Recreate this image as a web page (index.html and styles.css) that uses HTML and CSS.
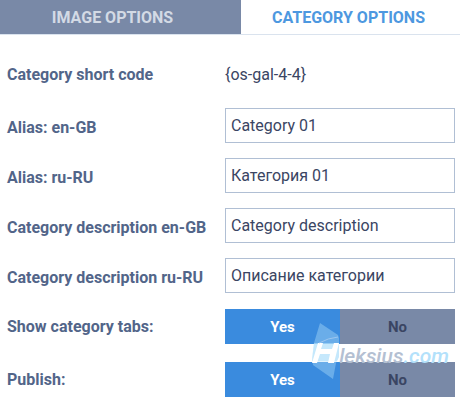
FILE: index.html
```
<!DOCTYPE html>
<html lang="en">
<head>
<meta charset="utf-8">
<title>Category options</title>
<link rel="stylesheet" href="styles.css">
</head>
<body>
<nav class="tabs">
  <a class="tab" href="#image">IMAGE OPTIONS</a>
  <a class="tab tab-active" href="#category">CATEGORY OPTIONS</a>
</nav>
<form class="options">
  <div class="row row-static">
    <span class="label">Category short code</span>
    <span class="value">{os-gal-4-4}</span>
  </div>
  <div class="row">
    <label class="label" for="alias-en">Alias: en-GB</label>
    <input class="field" id="alias-en" type="text" value="Category 01">
  </div>
  <div class="row">
    <label class="label" for="alias-ru">Alias: ru-RU</label>
    <input class="field" id="alias-ru" type="text" value="Категория 01">
  </div>
  <div class="row">
    <label class="label" for="desc-en">Category description en-GB</label>
    <input class="field" id="desc-en" type="text" value="Category description">
  </div>
  <div class="row">
    <label class="label" for="desc-ru">Category description ru-RU</label>
    <input class="field" id="desc-ru" type="text" value="Описание категории">
  </div>
  <div class="toggles">
    <div class="row">
      <span class="label" id="tabs-label">Show category tabs:</span>
      <div class="toggle" role="radiogroup" aria-labelledby="tabs-label">
        <input type="radio" name="tabs" id="tabs-yes" checked><label for="tabs-yes">Yes</label>
        <input type="radio" name="tabs" id="tabs-no"><label for="tabs-no">No</label>
      </div>
    </div>
    <div class="row">
      <span class="label" id="publish-label">Publish:</span>
      <div class="toggle" role="radiogroup" aria-labelledby="publish-label">
        <input type="radio" name="publish" id="publish-yes" checked><label for="publish-yes">Yes</label>
        <input type="radio" name="publish" id="publish-no"><label for="publish-no">No</label>
      </div>
    </div>
    <div class="watermark">
      <svg class="mark" viewBox="0 0 30 58" aria-hidden="true">
        <path class="mark-back" d="M9 1 L27 13 L28 16 L28 35 L25 41 L22 57 L2 43 L1 36 L3 21 Z"/>
        <path class="mark-band" d="M3 21 L28 21 L28 35 L26 39 L1 39 Z"/>
        <path class="mark-front" d="M7 21 L12 21 L10 27 L21 27 L23 21 L28 21 L23 41 L17 41 L19 32 L9 32 L6 41 L1 41 Z"/>
        <path class="mark-line" d="M8 21 Q17 16 27 15"/>
      </svg>
      <span class="name">leksius<span class="domain">.com</span></span>
    </div>
  </div>
</form>
</body>
</html>
```
FILE: styles.css
```
* {
  box-sizing: border-box;
}

body {
  margin: 0;
  background: #fff;
  color: #3a4563;
  font: 16px/20px Roboto, sans-serif;
}

.tabs {
  display: flex;
  border-bottom: 1px solid #dae3ee;
}

.tab {
  flex: 1;
  padding: 8px 0 6px;
  background: #7989a7;
  color: #d3dae5;
  font-weight: 700;
  text-align: center;
  text-decoration: none;
  white-space: nowrap;
}

.tab:first-child {
  flex: 0 0 241px;
  padding-right: 16px;
}

.tab-active {
  padding-right: 4px;
  background: #fff;
  color: #4d98e0;
}

.options {
  display: grid;
  gap: 15px;
  padding: 22px 5px 0 7px;
}

.row {
  display: grid;
  grid-template-columns: 218px 1fr;
  align-items: center;
}

.row-static {
  min-height: 36px;
}

.label {
  padding-top: 4px;
  color: #526589;
  font-weight: 700;
}

.row-static .label {
  padding-top: 0;
}

.field {
  width: 100%;
  height: 35px;
  padding: 0 5px;
  border: 1px solid #b0bfd4;
  border-radius: 0;
  background: #fff;
  color: #3a4563;
  font: inherit;
}

.toggles {
  display: grid;
  gap: 18px;
  position: relative;
  padding-top: 1px;
}

.toggles .label {
  padding-top: 1px;
}

.toggle {
  display: flex;
}

.toggle input {
  position: absolute;
  opacity: 0;
}

.toggle label {
  flex: 1;
  height: 35px;
  background: #7989a7;
  color: #3a4563;
  font-size: 15px;
  font-weight: 700;
  line-height: 36px;
  text-align: center;
}

.toggle input:checked + label {
  background: #3a8bde;
  color: #fff;
}

.watermark {
  position: absolute;
  top: 14px;
  right: 6px;
  display: flex;
  pointer-events: none;
}

.mark {
  width: 30px;
  height: 58px;
  margin-right: -2px;
}

.mark-back {
  fill: #b3e1fb;
  fill-opacity: 0.4;
}

.mark-band {
  fill: #b3e1fb;
  fill-opacity: 0.6;
}

.mark-front {
  fill: #fff;
}

.mark-line {
  fill: none;
  stroke: #9cc6ef;
  stroke-width: 1;
}

.name {
  padding-top: 22px;
  color: #b4c0d2;
  font: italic 500 21px/24px Roboto, sans-serif;
}

.domain {
  color: #b3e1fb;
}
```
